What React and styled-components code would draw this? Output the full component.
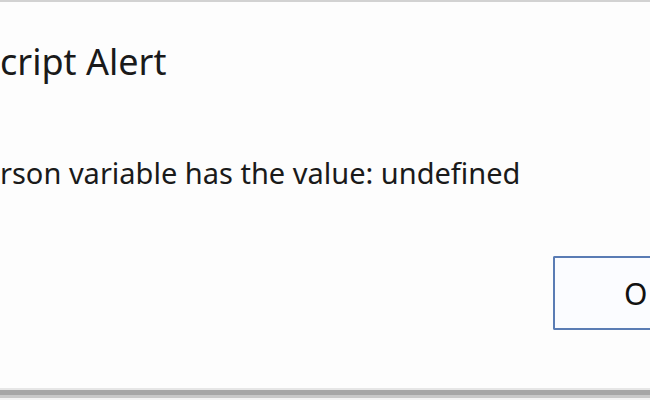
import React from 'react';
import styled, { createGlobalStyle } from 'styled-components';

const GlobalStyle = createGlobalStyle`
  html, body {
    margin: 0;
    padding: 0;
    overflow: hidden;
    background: #fdfdfd;
  }
`;

const Dialog = styled.div`
  width: 650px;
  height: 400px;
  box-sizing: border-box;
  display: flex;
  flex-direction: column;
  background: #fdfdfd;
  border-top: 2px solid #d2d2d2;
  font-family: "Noto Sans", "Open Sans", sans-serif;
  color: #1a1a1a;
  overflow: hidden;
`;

const Title = styled.div`
  font-size: 36px;
  line-height: 44px;
  margin-top: 38px;
  white-space: nowrap;
`;

const Message = styled.div`
  font-size: 29px;
  line-height: 34px;
  margin-top: 72px;
  white-space: nowrap;
`;

const Actions = styled.div`
  display: flex;
  margin-top: 66px;
  padding-left: 553px;
`;

const Button = styled.button`
  flex: none;
  width: 97px;
  height: 74px;
  box-sizing: border-box;
  border: 2px solid #5a7cb4;
  border-right: none;
  border-radius: 2px 0 0 2px;
  background: #fbfcff;
  font-family: "Noto Sans", "Open Sans", sans-serif;
  font-size: 30px;
  color: #111;
  text-align: left;
  padding: 0 0 0 69px;
`;

const Footer = styled.div`
  margin-top: auto;
  height: 12px;
  background: linear-gradient(#e6e6e6 0, #e6e6e6 2px, #a6a6a6 2px, #a6a6a6 7px, #c8c8c8 7px, #c8c8c8 10px, #f4f4f4 10px);
`;

export default function App() {
  return (
    <>
      <GlobalStyle />
      <Dialog>
        <Title>cript Alert</Title>
        <Message>rson variable has the value: undefined</Message>
        <Actions>
          <Button>O</Button>
        </Actions>
        <Footer />
      </Dialog>
    </>
  );
}
